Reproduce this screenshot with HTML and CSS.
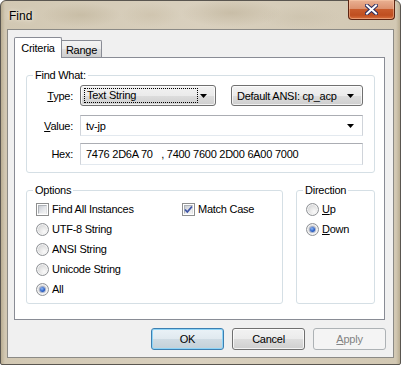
FILE: index.html
```html
<!DOCTYPE html>
<html>
<head>
<meta charset="utf-8">
<title>Find</title>
<link rel="stylesheet" href="styles.css">
</head>
<body>
<div class="window">
  <div class="titlebar">
    <span class="title">Find</span>
    <div class="close">
      <svg width="13" height="11" viewBox="0 0 13 11">
        <path d="M2 1.5 L11 9.5 M11 1.5 L2 9.5" stroke="#2a2c5e" stroke-width="4" stroke-linecap="square" fill="none"/>
        <path d="M2 1.5 L11 9.5 M11 1.5 L2 9.5" stroke="#ffffff" stroke-width="2" stroke-linecap="square" fill="none"/>
      </svg>
    </div>
  </div>
  <div class="client">
    <div class="tabs">
      <div class="tab active">Criteria</div>
      <div class="tab">Range</div>
    </div>
    <div class="panel">
      <fieldset class="group findwhat">
        <legend>Find What:</legend>
        <div class="fw-grid">
          <label class="lbl"><u>T</u>ype:</label>
          <div class="ctrls">
            <div class="combo btn-combo type-combo">
              <span class="focus">Text String</span>
              <svg class="arrow" width="7" height="4" viewBox="0 0 7 4"><polygon points="0,0 7,0 3.5,4" fill="#000"/></svg>
            </div>
            <div class="combo btn-combo ansi-combo">
              <span class="ctext">Default ANSI: cp_acp</span>
              <svg class="arrow" width="7" height="4" viewBox="0 0 7 4"><polygon points="0,0 7,0 3.5,4" fill="#000"/></svg>
            </div>
          </div>
          <label class="lbl row2"><u>V</u>alue:</label>
          <div class="combo edit-combo row2">
            <span class="ctext">tv-jp</span>
            <svg class="arrow" width="7" height="4" viewBox="0 0 7 4"><polygon points="0,0 7,0 3.5,4" fill="#000"/></svg>
          </div>
          <label class="lbl row3">Hex:</label>
          <div class="edit row3"><span class="ctext">7476 2D6A 70&nbsp;&nbsp;&nbsp;, 7400 7600 2D00 6A00 7000</span></div>
        </div>
      </fieldset>
      <div class="lower">
        <fieldset class="group options">
          <legend>Options</legend>
          <div class="opt-grid">
            <div class="item"><span class="check"></span>Find All Instances</div>
            <div class="item"><span class="check checked"><svg width="11" height="11" viewBox="0 0 11 11"><path d="M2 5.5 L4.3 8 L9 2.5" stroke="#3d54a6" stroke-width="1.8" fill="none"/></svg></span>Match Case</div>
            <div class="item full"><span class="radio"></span>UTF-8 String</div>
            <div class="item full"><span class="radio"></span>ANSI String</div>
            <div class="item full"><span class="radio"></span>Unicode String</div>
            <div class="item full"><span class="radio on"></span>All</div>
          </div>
        </fieldset>
        <fieldset class="group direction">
          <legend>Direction</legend>
          <div class="dir-list">
            <div class="item"><span class="radio"></span><span><u>U</u>p</span></div>
            <div class="item"><span class="radio on"></span><span><u>D</u>own</span></div>
          </div>
        </fieldset>
      </div>
    </div>
    <div class="buttons">
      <div class="button default">OK</div>
      <div class="button">Cancel</div>
      <div class="button disabled"><u>A</u>pply</div>
    </div>
  </div>
</div>
</body>
</html>
```
FILE: styles.css
```css
* { box-sizing: border-box; }
html, body { margin: 0; padding: 0; }
body {
  width: 401px;
  height: 365px;
  overflow: hidden;
  background: #ffffff;
  font-family: "Liberation Sans", Arial, sans-serif;
  font-size: 11px;
  letter-spacing: -0.25px;
  color: #000;
}
.window {
  width: 401px;
  height: 365px;
  border: 1px solid #5a5650;
  border-radius: 6px 6px 2px 2px;
  padding: 0 6px 6px 6px;
  display: flex;
  flex-direction: column;
  background-color: #d7cebb;
  background-image:
    radial-gradient(ellipse 40px 12px at 80px 14px, rgba(190,178,152,0.55), rgba(190,178,152,0)),
    radial-gradient(ellipse 30px 12px at 150px 14px, rgba(200,188,164,0.5), rgba(200,188,164,0)),
    radial-gradient(ellipse 50px 14px at 230px 12px, rgba(185,172,146,0.5), rgba(185,172,146,0)),
    radial-gradient(ellipse 40px 12px at 300px 16px, rgba(200,190,168,0.5), rgba(200,190,168,0)),
    linear-gradient(to right, #b9ad92 0px, #d2c8b3 4px, #d9d0be 50%, #d2c8b3 calc(100% - 4px), #b9ad92 100%);
}
.titlebar {
  height: 28px;
  display: flex;
  align-items: flex-start;
}
.title {
  font-family: "Liberation Sans", Arial, sans-serif;
  font-size: 12px;
  letter-spacing: 0;
  margin-left: 2px;
  margin-top: 8px;
  color: #000;
  text-shadow: 0 0 6px #efe9dc, 0 0 3px #efe9dc;
}
.close {
  margin-left: auto;
  margin-right: -1px;
  margin-top: -1px;
  width: 47px;
  height: 20px;
  border: 1px solid #5c2412;
  border-top: none;
  border-radius: 0 0 4px 4px;
  background: linear-gradient(to bottom, #e9b193 0%, #dc9270 45%, #c85b2c 50%, #bf4e20 80%, #d9703e 100%);
  box-shadow: inset 0 0 0 1px rgba(255,210,180,0.45);
  display: flex;
  align-items: center;
  justify-content: center;
}
.client {
  flex: 1;
  background: #f0f0f0;
  border: 1px solid #8b8a86;
  padding: 7px 7px 7px 6px;
  display: flex;
  flex-direction: column;
}
.tabs {
  display: flex;
  align-items: flex-end;
  height: 20px;
}
.tab {
  height: 17px;
  width: 40px;
  border: 1px solid #898c95;
  border-bottom: none;
  border-left: none;
  border-radius: 0 2px 0 0;
  background: linear-gradient(to bottom, #f3f3f3 0%, #ebebeb 50%, #dddddd 51%, #cfcfcf 100%);
  display: flex;
  align-items: center;
  justify-content: center;
  padding-top: 1px;
}
.tab.active {
  width: 48px;
  height: 21px;
  margin-bottom: -1px;
  border-left: 1px solid #898c95;
  border-radius: 2px 2px 0 0;
  background: #ffffff;
  position: relative;
  z-index: 1;
  padding-top: 0;
  padding-bottom: 1px;
}
.panel {
  width: 371px;
  height: 263px;
  background: #ffffff;
  border: 1px solid #898c95;
  padding: 11px 9px 15px 11px;
  display: flex;
  flex-direction: column;
}
.group {
  margin: 0;
  padding: 0;
  border: 1px solid #d5dfe5;
  border-radius: 3px;
  min-width: 0;
}
.group legend {
  padding: 0 2px;
  margin-left: 6px;
  line-height: 13px;
  height: 13px;
}
.findwhat { width: 349px; }
.fw-grid {
  display: grid;
  grid-template-columns: 46px 1fr;
  column-gap: 7px;
  padding: 3px 11px 7px 0;
  align-items: center;
}
.lbl { text-align: right; }
.ctrls { display: flex; gap: 15px; }
.row2 { margin-top: 9px; }
.row3 { margin-top: 7px; }
.combo {
  height: 21px;
  display: flex;
  align-items: center;
  position: relative;
}
.btn-combo {
  border: 1px solid #707070;
  border-radius: 3px;
  background: linear-gradient(to bottom, #f2f2f2 0%, #ebebeb 50%, #dddddd 51%, #cfcfcf 100%);
  box-shadow: inset 0 0 0 1px rgba(255,255,255,0.7);
  padding-left: 3px;
}
.type-combo { width: 136px; }
.ansi-combo { width: 132px; padding-left: 5px; }
.focus {
  flex: 1;
  height: 15px;
  margin-right: 17px;
  border: 1px dotted #000;
  line-height: 13px;
  padding-left: 2px;
}
.arrow {
  position: absolute;
  right: 8px;
  top: 8px;
}
.edit-combo, .edit {
  background: #ffffff;
  border: 1px solid #d0d4da;
  border-top-color: #abadb3;
  border-bottom-color: #e3e9ef;
  padding-left: 5px;
}
.edit { height: 22px; display: flex; align-items: center; }
.lower {
  display: flex;
  gap: 13px;
  margin-top: 11px;
}
.options { width: 257px; height: 120px; }
.direction { width: 79px; height: 120px; }
.opt-grid {
  display: grid;
  grid-template-columns: 146px 1fr;
  grid-auto-rows: 20px;
  padding: 2px 0 0 9px;
}
.full { grid-column: 1 / -1; }
.dir-list {
  display: grid;
  grid-auto-rows: 20px;
  padding: 2px 0 0 9px;
}
.item {
  display: flex;
  align-items: center;
  gap: 3px;
}
.check {
  width: 13px;
  height: 13px;
  border: 1px solid #8e8f8f;
  background: #ffffff;
  padding: 1px;
  display: flex;
  flex: none;
}
.check::before {
  content: "";
  flex: 1;
  background: linear-gradient(135deg, #c8ccd2 0%, #e2e4e8 50%, #f4f4f4 100%);
  border: 1px solid #a9adb3;
  border-color: #aeb2b7 #dfe1e3 #f2f2f2 #aeb2b7;
}
.check.checked { position: relative; }
.check.checked svg {
  position: absolute;
  left: 0;
  top: 0;
}
.radio {
  width: 13px;
  height: 13px;
  border-radius: 50%;
  border: 1px solid #8f9296;
  background: radial-gradient(circle at 65% 70%, #fafafa 0%, #e4e4e4 45%, #c4c7cb 100%);
  box-shadow: inset 0 0 0 1px #f4f4f4;
  flex: none;
  display: flex;
  align-items: center;
  justify-content: center;
}
.radio.on::after {
  content: "";
  width: 5px;
  height: 5px;
  border-radius: 50%;
  background: radial-gradient(circle at 40% 35%, #8fb8f2 0%, #2c62c9 55%, #0f3a91 100%);
  box-shadow: 0 0 0 1px rgba(40,70,140,0.35);
}
.buttons {
  display: flex;
  justify-content: flex-end;
  gap: 8px;
  margin-top: 8px;
}
.button {
  width: 73px;
  height: 22px;
  border: 1px solid #707070;
  border-radius: 3px;
  background: linear-gradient(to bottom, #f2f2f2 0%, #ebebeb 50%, #dddddd 51%, #cfcfcf 100%);
  box-shadow: inset 0 0 0 1px rgba(255,255,255,0.75);
  display: flex;
  align-items: center;
  justify-content: center;
}
.button.default {
  border-color: #3c7fb1;
  box-shadow: inset 0 0 0 1px #8ed4f7;
  background: linear-gradient(to bottom, #eaf2f7 0%, #e0e9ef 50%, #cfdbe3 51%, #c3d0d8 100%);
}
.button.disabled {
  border-color: #adb2b5;
  background: #f4f4f4;
  box-shadow: none;
  color: #838383;
}
```
